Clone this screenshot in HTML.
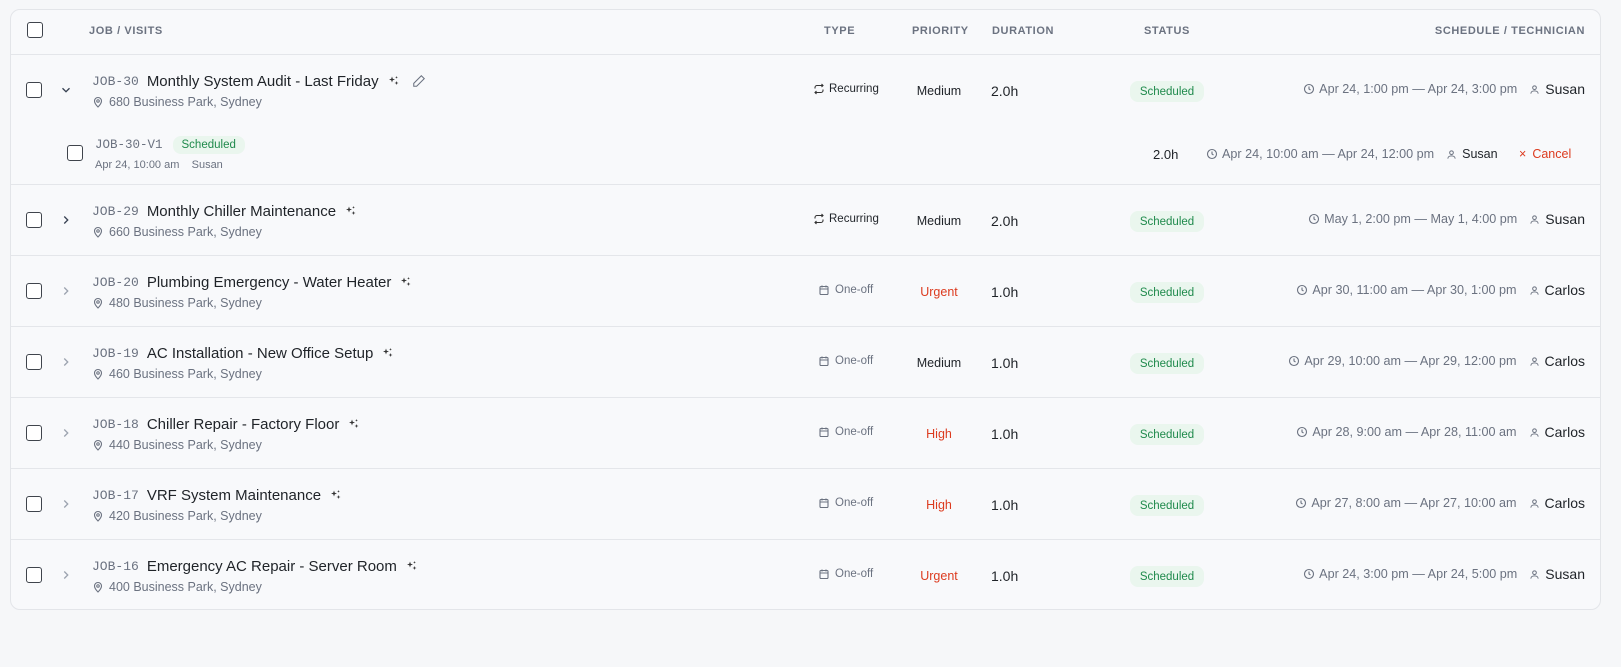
<!DOCTYPE html>
<html><head><meta charset="utf-8"><style>
*{box-sizing:border-box;margin:0;padding:0}
body{width:1621px;height:667px;background:#f6f7f9;font-family:"Liberation Sans",sans-serif;position:relative;overflow:hidden;color:#1f2328}
.card{position:absolute;left:10px;top:9px;width:1591px;height:601px;border:1px solid #e3e5e9;border-radius:10px;background:#f8f9fb;overflow:hidden}
.a{position:absolute;white-space:nowrap;display:flex;align-items:center;height:20px}
.hd{font-size:11px;font-weight:bold;letter-spacing:.6px;color:#6b7280}
.cb{position:absolute;width:16px;height:16px;border:1.5px solid #3f444c;border-radius:3px;background:#fff}
.line{position:absolute;left:0;right:0;height:1px;background:#e4e6ea}
.id{font-family:"Liberation Mono",monospace;font-size:13px;color:#6b7280;margin-right:8px}
.title{font-size:15px;color:#1f2328}
.addr{font-size:12.5px;color:#6b7280}
.type{font-size:11.5px;color:#4b5563}
.pri{font-size:12.5px;color:#1f2328}
.dur{font-size:14px;color:#1f2328}
.badge{position:absolute;height:21px;width:74px;border-radius:8px;background:#eaf6ee;color:#1f8a4c;font-size:11.5px;display:flex;align-items:center;justify-content:center}
.sch{font-size:12.6px;color:#6b7280}
.tech{font-size:14px;color:#1f2328}
svg{flex:none}
</style></head><body>
<div class="card">
<div class="cb" style="left:16px;top:12px"></div>
<div class="a hd" style="left:78px;top:11px">JOB / VISITS</div>
<div class="a hd" style="left:813px;top:11px">TYPE</div>
<div class="a hd" style="left:901px;top:11px">PRIORITY</div>
<div class="a hd" style="left:981px;top:11px">DURATION</div>
<div class="a hd" style="left:1133px;top:11px">STATUS</div>
<div class="a hd" style="right:15px;top:11px">SCHEDULE / TECHNICIAN</div>
<div class="line" style="top:44px"></div>
</div>
<div id="rows"></div>
<script>
const pin='<svg width="12" height="12" viewBox="0 0 24 24" fill="none" stroke="#6b7280" stroke-width="2.2" style="margin-right:5px"><path d="M12 22s7-7 7-12a7 7 0 0 0-14 0c0 5 7 12 7 12z"/><circle cx="12" cy="10" r="2.5"/></svg>';
const spark='<svg width="12" height="12" viewBox="0 0 24 24" fill="#333" style="margin-left:9px"><path d="M8 3l1.5 4.5L14 9l-4.5 1.5L8 15l-1.5-4.5L2 9l4.5-1.5z"/><path d="M17 12l1 3 3 1-3 1-1 3-1-3-3-1 3-1z"/><path d="M17 2l.7 2 2 .7-2 .7-.7 2-.7-2-2-.7 2-.7z"/></svg>';
const clock='<svg width="12" height="12" viewBox="0 0 24 24" fill="none" stroke="#6b7280" stroke-width="2.2" style="margin-right:4px"><circle cx="12" cy="12" r="9"/><path d="M12 7v5l3 2"/></svg>';
const user='<svg width="11" height="11" viewBox="0 0 24 24" fill="none" stroke="#6b7280" stroke-width="2.2" style="margin:0 5px 0 12px"><circle cx="12" cy="8" r="4"/><path d="M4 21c0-4 4-6 8-6s8 2 8 6"/></svg>';
const rec='<svg width="12" height="12" viewBox="0 0 24 24" fill="none" stroke="#333" stroke-width="2.2" style="margin-right:4px"><path d="M17 2l3 3-3 3"/><path d="M4 11V9a4 4 0 0 1 4-4h12"/><path d="M7 22l-3-3 3-3"/><path d="M20 13v2a4 4 0 0 1-4 4H4"/></svg>';
const cal='<svg width="12" height="12" viewBox="0 0 24 24" fill="none" stroke="#6b7280" stroke-width="2.2" style="margin-right:5px"><rect x="4" y="5" width="16" height="16" rx="2"/><path d="M4 10h16M8 3v4M16 3v4"/></svg>';
const data=[
[54,'JOB-30','Monthly System Audit - Last Friday','680',1,'Medium','#1f2328','2.0h','Apr 24, 1:00 pm — Apr 24, 3:00 pm','Susan','down'],
[184,'JOB-29','Monthly Chiller Maintenance','660',1,'Medium','#1f2328','2.0h','May 1, 2:00 pm — May 1, 4:00 pm','Susan','dark'],
[255,'JOB-20','Plumbing Emergency - Water Heater','480',0,'Urgent','#dc3b1f','1.0h','Apr 30, 11:00 am — Apr 30, 1:00 pm','Carlos','light'],
[326,'JOB-19','AC Installation - New Office Setup','460',0,'Medium','#1f2328','1.0h','Apr 29, 10:00 am — Apr 29, 12:00 pm','Carlos','light'],
[397,'JOB-18','Chiller Repair - Factory Floor','440',0,'High','#dc3b1f','1.0h','Apr 28, 9:00 am — Apr 28, 11:00 am','Carlos','light'],
[468,'JOB-17','VRF System Maintenance','420',0,'High','#dc3b1f','1.0h','Apr 27, 8:00 am — Apr 27, 10:00 am','Carlos','light'],
[539,'JOB-16','Emergency AC Repair - Server Room','400',0,'Urgent','#dc3b1f','1.0h','Apr 24, 3:00 pm — Apr 24, 5:00 pm','Susan','light']];
let h='';
data.forEach((d,i)=>{const T=d[0];
h+=`<div class="cb" style="left:26px;top:${T+28}px"></div>`;
const chev=d[10]=='down'?'<path d="M6 9l6 6 6-6"/>':'<path d="M9 6l6 6-6 6"/>';
h+=`<div class="a" style="left:59px;top:${T+26}px"><svg width="14" height="14" viewBox="0 0 24 24" fill="none" stroke="${d[10]=='light'?'#9ca3af':'#374151'}" stroke-width="2.2">${chev}</svg></div>`;
h+=`<div class="a" style="left:92px;top:${T+17}px"><span class="id">${d[1]}</span><span class="title">${d[2]}</span>${spark}${i==0?'<svg width="14" height="14" viewBox="0 0 24 24" fill="none" stroke="#6b7280" stroke-width="1.8" style="margin-left:12px"><path d="M16 3l5 5L8 21H3v-5z"/></svg>':''}</div>`;
h+=`<div class="a addr" style="left:92px;top:${T+38}px">${pin}${d[3]} Business Park, Sydney</div>`;
h+=`<div class="a type" style="left:${d[4]?813:818}px;top:${T+25}px;color:${d[4]?'#1f2328':'#6b7280'}">${d[4]?rec+'Recurring':cal+'One-off'}</div>`;
h+=`<div class="a pri" style="left:899px;width:80px;justify-content:center;top:${T+27}px;color:${d[6]}">${d[5]}</div>`;
h+=`<div class="a dur" style="left:991px;top:${T+27}px">${d[7]}</div>`;
h+=`<div class="badge" style="left:1130px;top:${T+27}px">Scheduled</div>`;
h+=`<div class="a sch" style="right:36px;top:${T+25}px">${clock}${d[8]}${user}<span class="tech">${d[9]}</span></div>`;
if(i<6)h+=`<div style="position:absolute;left:11px;width:1589px;height:1px;background:#e4e6ea;top:${i==0?184:T+71}px"></div>`;
});
h+=`<div class="cb" style="left:67px;top:145px"></div>`;
h+=`<div class="a" style="left:95px;top:135px"><span class="id" style="font-size:12.5px;margin-right:10px">JOB-30-V1</span><span style="background:#eaf6ee;color:#1f8a4c;font-size:11.5px;border-radius:8px;padding:3px 9px">Scheduled</span></div>`;
h+=`<div class="a" style="left:95px;top:155px;font-size:11px;color:#6b7280">Apr 24, 10:00 am&nbsp;&nbsp;&nbsp;&nbsp;Susan</div>`;
h+=`<div class="a" style="left:1153px;top:144px;font-size:13px">2.0h</div>`;
h+=`<div class="a sch" style="left:1206px;top:144px">${clock}Apr 24, 10:00 am — Apr 24, 12:00 pm${user}<span style="font-size:12.5px;color:#1f2328">Susan</span></div>`;
h+=`<div class="a" style="left:1519px;top:144px;font-size:12.5px;color:#dc3b1f"><span style="margin-right:6px">×</span>Cancel</div>`;
document.getElementById('rows').innerHTML=h;
</script>
</body></html>
